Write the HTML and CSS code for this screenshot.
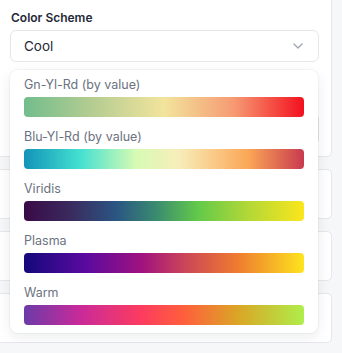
FILE: index.html
```html
<!DOCTYPE html>
<html lang="en">
<head>
    <meta charset="UTF-8">
    <title>Color Scheme</title>
    <link rel="stylesheet" href="styles.css">
</head>
<body>
<div class="panel">
    <div class="card card_top">
        <div class="label">Color Scheme</div>
        <div class="select_wrap">
            <div class="select">
                <span>Cool</span>
                <svg class="chevron" width="10" height="6" viewBox="0 0 10 6">
                    <path d="M1 1l4 4 4-4" fill="none" stroke="#9ca3af" stroke-width="1.3" stroke-linecap="round" stroke-linejoin="round"/>
                </svg>
            </div>
            <div class="menu">
                <div class="option">
                    <div class="option_name">Gn-Yl-Rd (by value)</div>
                    <div class="ramp gnylrd"></div>
                </div>
                <div class="option">
                    <div class="option_name">Blu-Yl-Rd (by value)</div>
                    <div class="ramp bluylrd"></div>
                </div>
                <div class="option">
                    <div class="option_name">Viridis</div>
                    <div class="ramp viridis"></div>
                </div>
                <div class="option">
                    <div class="option_name">Plasma</div>
                    <div class="ramp plasma"></div>
                </div>
                <div class="option">
                    <div class="option_name">Warm</div>
                    <div class="ramp warm"></div>
                </div>
            </div>
        </div>
        <div class="field"></div>
    </div>
    <div class="card"></div>
    <div class="card"></div>
    <div class="card"></div>
</div>
</body>
</html>
```

FILE: styles.css
```css
body {
    margin: 0;
    background-color: #f6f7f9;
    font-family: Inter, "Liberation Sans", sans-serif;
}

.panel {
    width: 332px;
    display: flex;
    flex-direction: column;
    gap: 12px;
}

.card {
    margin-left: -3px;
    height: 48px;
    padding: 0 12px;
    background-color: #fff;
    border: 1px solid #e5e7eb;
    border-radius: 5px;
}

.card_top {
    margin-top: -6px;
    height: auto;
    padding-top: 15px;
    padding-bottom: 11px;
}

.label {
    padding-left: 1px;
    font-size: 12px;
    line-height: 16px;
    font-weight: 600;
    color: #1f2937;
}

.select_wrap {
    position: relative;
    margin-top: 4px;
}

.select {
    display: flex;
    align-items: center;
    justify-content: space-between;
    height: 30px;
    padding: 0 13px;
    border: 1px solid #e5e7eb;
    border-radius: 6px;
    font-size: 13.5px;
    color: #1f2937;
}

.chevron {
    margin-right: 2px;
}

.field {
    margin-top: 51px;
    height: 30px;
    border: 1px solid #e5e7eb;
    border-radius: 6px;
}

.menu {
    position: absolute;
    top: 40px;
    left: 0;
    right: 1px;
    z-index: 5;
    padding: 6px 14px 8px;
    background-color: #fff;
    border-radius: 8px;
    box-shadow: 0 0 0 1px rgba(17, 24, 39, 0.04), 0 4px 14px rgba(17, 24, 39, 0.08);
}

.option + .option {
    margin-top: 11px;
}

.option_name {
    font-size: 12.5px;
    line-height: 17px;
    color: #6b7280;
    margin-bottom: 4px;
}

.ramp {
    height: 20px;
    border-radius: 4px;
}

.gnylrd {
    background: linear-gradient(to right, #72bd8c, #b6cd92 25%, #f2e49c 50%, #f69a72 75%, #f3101e);
}

.bluylrd {
    background: linear-gradient(to right, #1293b8, #44e0d1 20%, #d6fbb3 40%, #f7eebb 55%, #fba756 80%, #c9394f);
}

.viridis {
    background: linear-gradient(to right, #3a0a46, #3a2b5f 17%, #2a5683 33%, #3a8a70 47%, #62c94a 62%, #b2d837 80%, #fbe61c);
}

.plasma {
    background: linear-gradient(to right, #14087a, #5a0aa0 22%, #a0127f 42%, #cd4756 58%, #ee7b30 76%, #fee41e);
}

.warm {
    background: linear-gradient(to right, #6b3ba8, #c92a9a 20%, #fd3c5f 42%, #ff5f3c 57%, #d9a826 77%, #aeee4b);
}
```
